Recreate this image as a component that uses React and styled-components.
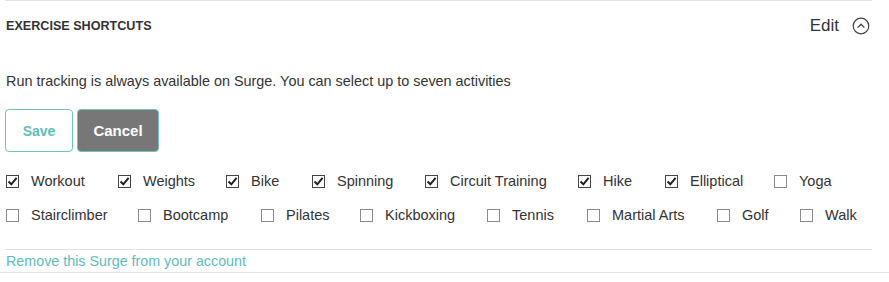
import styled, { createGlobalStyle } from "styled-components";

const GlobalStyle = createGlobalStyle`
  body {
    margin: 0;
    background: #fff;
    font-family: "Liberation Sans", Arial, sans-serif;
    color: #333;
  }
`;

const Panel = styled.div`
  width: 889px;
`;

const Inner = styled.div`
  margin: 0 17px 0 5px;
  border-top: 1px solid #e3e3e3;
`;

const Header = styled.div`
  height: 50px;
  display: flex;
  align-items: center;
  justify-content: space-between;
  padding-left: 1px;

  h2 {
    margin: 0;
    font-size: 12.6px;
    font-weight: 700;
    color: #333;
  }
`;

const EditBox = styled.div`
  display: flex;
  align-items: center;
  gap: 13px;
  font-size: 17px;
  color: #333;
  padding-right: 2px;
`;

const Note = styled.p`
  margin: 20px 0 0 1px;
  font-size: 14.4px;
  line-height: 20px;
`;

const Actions = styled.div`
  display: flex;
  gap: 4px;
  margin-top: 18px;
`;

const Button = styled.button`
  height: 43px;
  width: ${(p) => p.$w}px;
  border: 1px solid #6cc4c0;
  border-radius: 4px;
  background: ${(p) => (p.$primary ? "#777" : "#fff")};
  color: ${(p) => (p.$primary ? "#fff" : "#5dbdb9")};
  font-family: inherit;
  font-size: ${(p) => (p.$primary ? 15 : 14)}px;
  font-weight: 700;
  padding: 0;
`;

const Options = styled.div`
  margin-top: 19px;
  display: flex;
  flex-direction: column;
  gap: 14px;
`;

const Row = styled.div`
  display: flex;
  height: 20px;
  align-items: center;
`;

const Option = styled.label`
  display: flex;
  align-items: center;
  width: ${(p) => p.$w}px;
  font-size: 14.5px;
  color: #333;
  flex: none;
`;

const Box = styled.span`
  width: 13px;
  height: 13px;
  box-sizing: border-box;
  border: 1px solid ${(p) => (p.$on ? "#444" : "#8a8a8a")};
  margin: 0 12px 0 1px;
  display: flex;
  align-items: center;
  justify-content: center;
  flex: none;
  svg {
    display: block;
  }
`;

const Divider = styled.div`
  margin-top: 24px;
  border-top: 1px solid #e3e3e3;
`;

const RemoveLink = styled.a`
  display: block;
  height: 22px;
  line-height: 22px;
  font-size: 14.3px;
  color: #5dbdb9;
  text-decoration: none;
  padding-left: 1px;
`;

const Bottom = styled.div`
  border-top: 1px solid #e3e3e3;
`;

const row1 = [
  ["Workout", 112, true],
  ["Weights", 108, true],
  ["Bike", 86, true],
  ["Spinning", 113, true],
  ["Circuit Training", 153, true],
  ["Hike", 87, true],
  ["Elliptical", 109, true],
  ["Yoga", 80, false],
];

const row2 = [
  ["Stairclimber", 132, false],
  ["Bootcamp", 123, false],
  ["Pilates", 99, false],
  ["Kickboxing", 127, false],
  ["Tennis", 100, false],
  ["Martial Arts", 130, false],
  ["Golf", 83, false],
  ["Walk", 60, false],
];

function Check({ on }) {
  return (
    <Box $on={on}>
      {on && (
        <svg width="11" height="11" viewBox="0 0 11 11">
          <path d="M1.5 5.5 L4.3 8.3 L9.6 1.8" fill="none" stroke="#222" strokeWidth="2" />
        </svg>
      )}
    </Box>
  );
}

function ChevronCircle() {
  return (
    <svg width="18" height="18" viewBox="0 0 18 18">
      <circle cx="9" cy="9" r="7.8" fill="none" stroke="#444" strokeWidth="1.2" />
      <path d="M5.6 10.6 L9 7.2 L12.4 10.6" fill="none" stroke="#444" strokeWidth="1.3" />
    </svg>
  );
}

export default function App() {
  return (
    <>
      <GlobalStyle />
      <Panel>
        <Inner>
          <Header>
            <h2>EXERCISE SHORTCUTS</h2>
            <EditBox>
              <span>Edit</span>
              <ChevronCircle />
            </EditBox>
          </Header>
          <Note>Run tracking is always available on Surge. You can select up to seven activities</Note>
          <Actions>
            <Button $w={68}>Save</Button>
            <Button $w={82} $primary>
              Cancel
            </Button>
          </Actions>
          <Options>
            {[row1, row2].map((row, i) => (
              <Row key={i}>
                {row.map(([name, w, on]) => (
                  <Option key={name} $w={w}>
                    <Check on={on} />
                    {name}
                  </Option>
                ))}
              </Row>
            ))}
          </Options>
          <Divider />
          <RemoveLink href="#">Remove this Surge from your account</RemoveLink>
        </Inner>
        <Bottom />
      </Panel>
    </>
  );
}
